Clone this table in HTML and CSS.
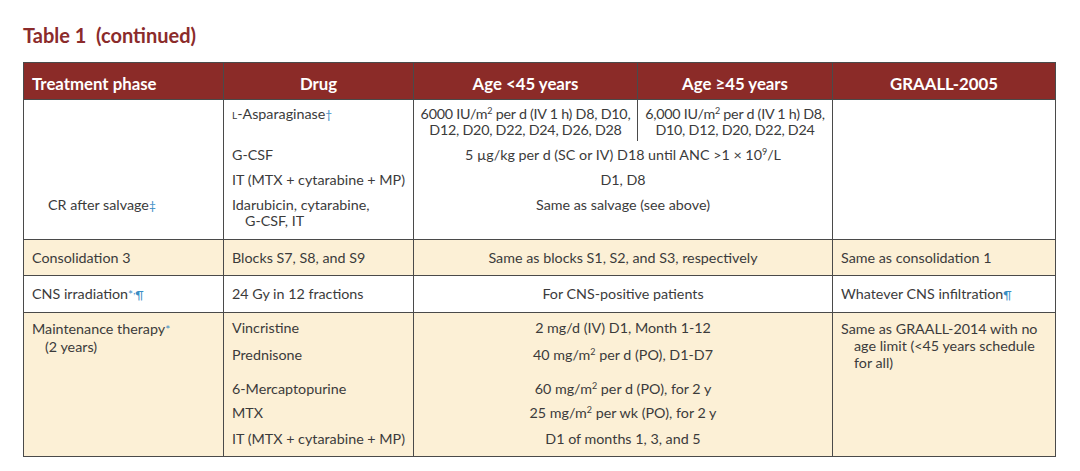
FILE: index.html
```html
<!DOCTYPE html>
<html>
<head>
<meta charset="utf-8">
<link rel="stylesheet" href="styles.css">
</head>
<body>
<div class="page">
  <h1 class="title">Table 1&nbsp; (continued)</h1>
  <table class="tbl">
    <colgroup>
      <col class="c1"><col class="c2"><col class="c3"><col class="c4"><col class="c5">
    </colgroup>
    <thead>
      <tr>
        <th class="left">Treatment phase</th>
        <th>Drug</th>
        <th>Age &lt;45 years</th>
        <th>Age &ge;45 years</th>
        <th>GRAALL-2005</th>
      </tr>
    </thead>
    <tbody class="grp white">
      <tr class="s first">
        <td></td>
        <td class="d"><span class="sc">L</span>-Asparaginase<span class="fn">&dagger;</span></td>
        <td class="ctr tight">6000 IU/m<sup>2</sup> per d (IV 1 h) D8, D10,<br>D12, D20, D22, D24, D26, D28</td>
        <td class="ctr tight">6,000 IU/m<sup>2</sup> per d (IV 1 h) D8,<br>D10, D12, D20, D22, D24</td>
        <td rowspan="4"></td>
      </tr>
      <tr class="s">
        <td></td>
        <td class="d">G-CSF</td>
        <td class="ctr" colspan="2">5 µg/kg per d (SC or IV) D18 until ANC &gt;1 × 10<sup>9</sup>/L</td>
      </tr>
      <tr class="s">
        <td></td>
        <td class="d">IT (MTX + cytarabine + MP)</td>
        <td class="ctr" colspan="2">D1, D8</td>
      </tr>
      <tr class="s last">
        <td class="sub">CR after salvage<span class="fn">&Dagger;</span></td>
        <td class="d hang">Idarubicin, cytarabine,<br>G-CSF, IT</td>
        <td class="ctr" colspan="2">Same as salvage (see above)</td>
      </tr>
    </tbody>
    <tbody class="grp tan">
      <tr class="one">
        <td>Consolidation 3</td>
        <td>Blocks S7, S8, and S9</td>
        <td class="ctr" colspan="2">Same as blocks S1, S2, and S3, respectively</td>
        <td>Same as consolidation 1</td>
      </tr>
    </tbody>
    <tbody class="grp white">
      <tr class="one">
        <td>CNS irradiation<span class="fn">*<sup>,</sup>&para;</span></td>
        <td>24 Gy in 12 fractions</td>
        <td class="ctr" colspan="2">For CNS-positive patients</td>
        <td>Whatever CNS infiltration<span class="fn">&para;</span></td>
      </tr>
    </tbody>
    <tbody class="grp tan">
      <tr class="m m1">
        <td rowspan="5" class="hang top">Maintenance therapy<span class="fn">*</span><br>(2 years)</td>
        <td class="d">Vincristine</td>
        <td class="ctr" colspan="2">2 mg/d (IV) D1, Month 1-12</td>
        <td rowspan="5" class="hang top">Same as GRAALL-2014 with no<br>age limit (&lt;45 years schedule<br>for all)</td>
      </tr>
      <tr class="m m2">
        <td class="d">Prednisone</td>
        <td class="ctr" colspan="2">40 mg/m<sup>2</sup> per d (PO), D1-D7</td>
      </tr>
      <tr class="m m3">
        <td class="d">6-Mercaptopurine</td>
        <td class="ctr" colspan="2">60 mg/m<sup>2</sup> per d (PO), for 2 y</td>
      </tr>
      <tr class="m m4">
        <td class="d">MTX</td>
        <td class="ctr" colspan="2">25 mg/m<sup>2</sup> per wk (PO), for 2 y</td>
      </tr>
      <tr class="m m5">
        <td class="d">IT (MTX + cytarabine + MP)</td>
        <td class="ctr" colspan="2">D1 of months 1, 3, and 5</td>
      </tr>
    </tbody>
  </table>
</div>
</body>
</html>
```

FILE: styles.css
```css
html, body {
  margin: 0;
  padding: 0;
  background: #ffffff;
}
body {
  font-family: Lato, "Noto Sans", "Liberation Sans", sans-serif;
  color: #3b3b3b;
}
.page {
  padding: 23px 0 0 23px;
}
.title {
  margin: 0 0 15px 0;
  font-size: 20px;
  line-height: 24px;
  font-weight: 700;
  color: #8b2b2b;
}
.tbl {
  border-collapse: collapse;
  table-layout: fixed;
  width: 1032px;
  font-size: 14.3px;
  line-height: 16px;
}
.c1 { width: 200px; }
.c2 { width: 190px; }
.c3 { width: 224px; }
.c4 { width: 195px; }
.c5 { width: 223px; }
.tbl th {
  background: #8b2b28;
  color: #ffffff;
  font-weight: 700;
  font-size: 16.8px;
  line-height: 20px;
  height: 37px;
  padding: 6px 8px 0 8px;
  text-align: center;
  border: 1.5px solid #4a4a4a;
  box-sizing: border-box;
}
.tbl th.left { text-align: left; }
.tbl td {
  padding: 0 8px;
  vertical-align: top;
  border-left: 1.5px solid #4a4a4a;
  border-right: 1.5px solid #4a4a4a;
}
.grp { border: 1.5px solid #4a4a4a; }
.white td { background: #ffffff; }
.tan td { background: #fcf0d6; }
.ctr { text-align: center; }
.tbl td.tight {
  padding-left: 2px;
  padding-right: 2px;
  white-space: nowrap;
  letter-spacing: -0.25px;
}
.one td {
  padding-top: 10px;
  padding-bottom: 9px;
}
.s td {
  padding-top: 6px;
  padding-bottom: 3px;
}
.s.last td { padding-bottom: 10px; }
.m td { padding-top: 4px; padding-bottom: 4px; }
.m1 td { padding-top: 7px; }
.m2 td { padding-top: 7px; }
.m3 td { padding-top: 14px; }
.m4 td { padding-top: 4px; }
.m5 td { padding-top: 6px; padding-bottom: 9px; }
.tbl td.top { vertical-align: top; padding-top: 7px; line-height: 17px; }
.hang {
  padding-left: 21px !important;
  text-indent: -13px;
}
.sub { padding-left: 24px !important; }
.fn {
  color: #3a8dc4;
  font-size: 12px;
}
.sc {
  font-size: 10px;
}
sup {
  font-size: 9px;
  line-height: 0;
  vertical-align: 5px;
}
.fn sup { color: #3a8dc4; }
```
